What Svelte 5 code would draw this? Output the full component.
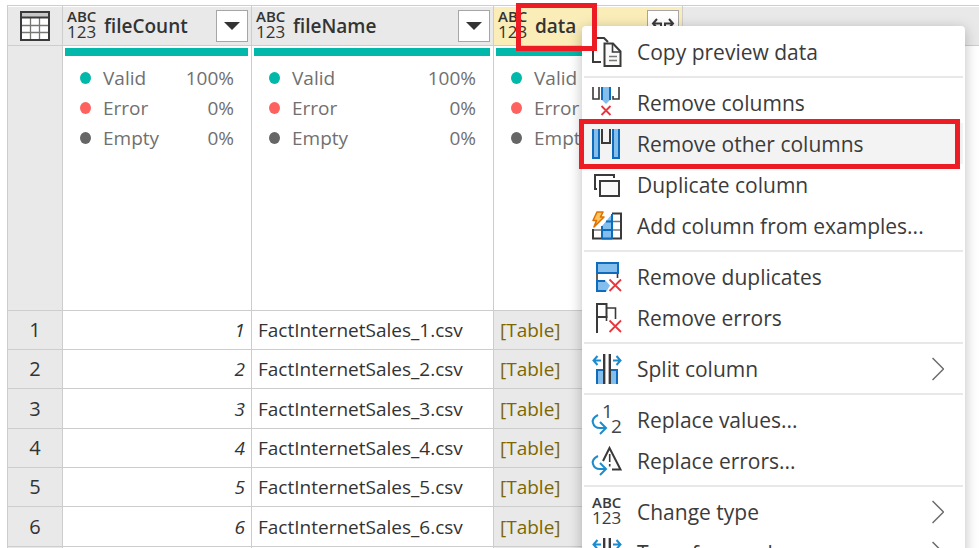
<script>
  const columns = [
    { name: 'fileCount', kind: 'filter' },
    { name: 'fileName', kind: 'filter' },
    { name: 'data', kind: 'expand', selected: true }
  ];
  const quality = [
    { label: 'Valid', value: '100%', tone: 'valid' },
    { label: 'Error', value: '0%', tone: 'error' },
    { label: 'Empty', value: '0%', tone: 'empty' }
  ];
  const rows = [1, 2, 3, 4, 5, 6];
  const groups = [
    [{ icon: 'copy', label: 'Copy preview data' }],
    [
      { icon: 'remove', label: 'Remove columns' },
      { icon: 'others', label: 'Remove other columns', active: true },
      { icon: 'duplicate', label: 'Duplicate column' },
      { icon: 'examples', label: 'Add column from examples...' }
    ],
    [
      { icon: 'dedupe', label: 'Remove duplicates' },
      { icon: 'errors', label: 'Remove errors' }
    ],
    [{ icon: 'split', label: 'Split column', sub: true }],
    [
      { icon: 'values', label: 'Replace values...' },
      { icon: 'replaceErrors', label: 'Replace errors...' }
    ],
    [
      { icon: 'type', label: 'Change type', sub: true },
      { icon: 'split', label: 'Transform column', sub: true }
    ]
  ];
</script>

{#snippet anyType()}
  <span class="any-type"><b>ABC</b><span>123</span></span>
{/snippet}

{#snippet icon(name)}
  {#if name === 'type'}
    {@render anyType()}
  {:else}
    <svg class="icon" viewBox="0 0 30 30" aria-hidden="true">
      {#if name === 'copy'}
        <path class="ink" d="M9 25H1V1h11l4 4" />
        <path class="ink paper" d="M12.500 6.500h8.500l7.500 8v14.500h-16z" />
        <path class="ink thin" d="M20.500 6.500v8.500h8" />
        <path class="grey" d="M17 19.500h8M17 23.500h8" />
      {:else if name === 'remove'}
        <path class="ink thin" d="M1 -1v12h6V-1M27 -1v12h-6V8" />
        <path fill="#83beec" d="M9 -1h10v12l-5 5-5-5z" />
        <path class="blue" d="M10 -1v13M18 -1v13" />
        <path class="red" d="M9.500 18l9 9M18.500 18l-9 9" />
      {:else if name === 'others'}
        <path fill="#83beec" d="M0 0h8v30H0zM20 0h8v30h-8z" />
        <path class="blue" d="M1 0v29h6V0M21 0v29h6V0" />
        <path class="ink" d="M10 0v14h8V0" />
      {:else if name === 'duplicate'}
        <path class="ink" d="M5 19H3V5h19v3" />
        <path class="ink paper" d="M8 11h19v15H8z" />
      {:else if name === 'examples'}
        <path class="grey" d="M1 19h28M20 10.500h9M10 19v8" />
        <path class="ink" d="M1 18v9.500h28V2.500h-9M20 18.500v9" />
        <path fill="#83beec" d="M10 15l10-12v25H10z" />
        <path class="blue" d="M10 27.500V15M20 27.500V3M10 19h10M14 10.500h6M10 27.500h10" />
        <path fill="#fbc35b" stroke="#e07000" stroke-width="1.600" stroke-linejoin="round" d="M5 1h6L8.500 6H12L2 16l2.500-6.500H1z" />
      {:else if name === 'dedupe'}
        <path class="ink thin" d="M5 11v8M25.500 11v5" />
        <path class="sky" d="M5 1h21v10H5z" />
        <path fill="#83beec" d="M4 18h9l5 5.500-4 6.500H4z" />
        <path class="blue" d="M13 19H5v10h9" />
        <path class="red" d="M17.500 17.500l11.500 11.500M29 17.500l-11.500 11.500" />
      {:else if name === 'errors'}
        <path class="ink" d="M5 30V1h9.500v13H5" />
        <path class="ink thin" d="M14.500 5h9v11M14.500 13v5" />
        <path class="red" d="M17.500 17.500l11.500 11.500M29 17.500l-11.500 11.500" />
      {:else if name === 'split'}
        <path fill="#83beec" d="M4 15h7v15H4zM19 15h7v15h-7z" />
        <path class="blue" d="M5 30V16h6M25 30V16h-6" />
        <path class="ink" d="M12 0v30M18 0v30" />
        <path stroke="#b5b5b5" stroke-width="1" d="M13.500 0v30M16.500 0v30" />
        <path class="azure" d="M9 6.500H1.500M5.500 2L1.500 6.500l4 4.500M21 6.500h7.500M24.500 2l4 4.500-4 4.500" />
      {:else if name === 'values'}
        <path class="azure" d="M6 10C2 12 0 15 1 18c1 4 4 5 7 5h6M8 17l6 6-6 6" />
        <text x="10" y="13">1</text>
        <text x="19" y="28">2</text>
      {:else if name === 'replaceErrors'}
        <path class="azure" d="M6 10C2 12 0 15 1 18c1 4 4 5 7 5h6M8 17l6 6-6 6" />
        <path class="ink" d="M11 15l6.500-13 11 21.500H20" />
        <path class="ink thin" d="M17.700 8v8M17.700 18v2.500" />
      {/if}
    </svg>
  {/if}
{/snippet}

<main>
  <table>
    <colgroup>
      <col class="index" /><col class="narrow" /><col class="wide" /><col class="narrow" /><col />
    </colgroup>
    <thead>
      <tr class="head">
        <th>
          <svg class="table-icon" viewBox="0 0 30 30" role="img" aria-label="Table">
            <path fill="#fff" d="M1 1h28v28H1z" />
            <path fill="#c8c8c8" d="M1 1h28v5H1z" />
            <path class="grey" d="M10.500 7v22M19.500 7v22M1 14.500h28M1 21.500h28" />
            <path class="ink" d="M1 1h28v28H1zM1 6.500h28" />
          </svg>
        </th>
        {#each columns as column}
          <th class:selected={column.selected}>
            <div class="title">
              {@render anyType()}
              <span class="name">{column.name}</span>
              <button aria-label="{column.kind} {column.name}">
                {#if column.kind === 'filter'}
                  <svg viewBox="0 0 30 30"><path fill="#333" d="M7 11h16l-8 8z" /></svg>
                {:else}
                  <svg viewBox="0 0 30 30"><path class="ink" d="M13 18V12.500H5M9 8l-4 4.500 4 4.500M17 18v-5.500h8M21 8l4 4.500-4 4.500" /></svg>
                {/if}
              </button>
            </div>
          </th>
        {/each}
        <th class="rest"></th>
      </tr>
    </thead>
    <tbody>
      <tr class="profile">
        <th></th>
        {#each columns as column}
          <td>
            <div class="bar"></div>
            <ul>
              {#each quality as item}
                <li><i class={item.tone}></i><span>{item.label}</span><span class="share">{item.value}</span></li>
              {/each}
            </ul>
          </td>
        {/each}
        <td class="rest"></td>
      </tr>
      {#each rows as row}
        <tr class="record">
          <th scope="row">{row}</th>
          <td class="number">{row}</td>
          <td>FactInternetSales_{row}.csv</td>
          <td class="link">[Table]</td>
          <td class="rest"></td>
        </tr>
      {/each}
      <tr class="record"><th></th><td></td><td></td><td class="link"></td><td class="rest"></td></tr>
    </tbody>
  </table>

  <div class="menu" role="menu">
    {#each groups as group, g}
      {#if g > 0}<hr />{/if}
      {#each group as item}
        <button role="menuitem" class:active={item.active}>
          {@render icon(item.icon)}
          <span class="label">{item.label}</span>
          {#if item.sub}
            <svg class="chevron" viewBox="0 0 12 24" aria-hidden="true"><path d="M0.500 1l11 11-11 11" /></svg>
          {/if}
        </button>
      {/each}
    {/each}
  </div>

  <div class="callout on-header"></div>
  <div class="callout on-item"></div>
</main>

<style>
  main {
    position: relative;
    height: 100vh;
    overflow: hidden;
    padding: 5px 0 0 7px;
    box-sizing: border-box;
    background: #fff;
    color: #333;
    font-family: "Open Sans", "Noto Sans", sans-serif;
    font-size: 19px;
    line-height: 30px;
  }
  table {
    width: 100%;
    table-layout: fixed;
    border-collapse: separate;
    border-spacing: 0;
    border: 1px solid #cdcdcd;
    border-width: 1px 0 0 1px;
  }
  .index { width: 55px; }
  .narrow { width: 189px; }
  .wide { width: 242px; }
  th, td {
    box-sizing: border-box;
    padding: 0;
    border: 1px solid #cdcdcd;
    border-width: 0 1px 1px 0;
    text-align: left;
    font-weight: 400;
  }
  th { background: #e9e9e9; text-align: center; }
  th.selected { background: #faedb8; }
  .rest { border-right: 0; }
  td.rest { border-bottom: 0; }
  .head th { height: 40px; box-shadow: inset 0 1px #fff; }
  .table-icon { display: block; width: 30px; height: 30px; margin: 0 auto; }
  .title { display: flex; align-items: center; padding: 0 3px 0 4px; }
  .name { flex: 1; margin-left: 7px; text-align: left; font-weight: 600; }
  .title button {
    width: 32px;
    height: 32px;
    padding: 0;
    border: 1px solid #a6a6a6;
    background: #fff;
  }
  .title button svg { display: block; width: 30px; height: 30px; }
  .any-type {
    display: flex;
    flex: none;
    flex-direction: column;
    width: 30px;
    height: 32px;
    text-align: left;
    font-size: 17px;
    line-height: 20px;
  }
  .any-type b { font-size: 15px; font-weight: 600; line-height: 12px; }

  .profile { height: 265px; vertical-align: top; }
  .profile td:not(.rest) { padding: 2px 3px 0 2px; }
  .bar { height: 8px; background: #01b8aa; }
  ul { margin: 7px 0 0; padding: 0 14px 0 15px; list-style: none; }
  li { display: flex; align-items: center; color: #707070; }
  li i { width: 11px; height: 12px; margin-right: 12px; border-radius: 50%; }
  .valid { background: #01b8aa; }
  .error { background: #fd625e; }
  .empty { background: #666; }
  .share { margin-left: auto; }

  .record { height: 39px; }
  .record:nth-child(3n + 1) { height: 40px; }
  .record th { font-size: 20px; }
  .record td { padding: 0 6px; }
  .record .number { text-align: right; font-style: italic; }
  .record .link { background: #e9e9e9; color: #7d6600; }

  .menu {
    position: absolute;
    top: 26px;
    left: 582px;
    width: 383px;
    box-sizing: border-box;
    padding: 5px 2px;
    border-radius: 4px;
    background: #fff;
    box-shadow: 0 3px 14px rgba(0, 0, 0, 0.26);
  }
  .menu button {
    display: flex;
    align-items: center;
    width: 100%;
    height: 41px;
    padding: 1px 19px 0 8px;
    border: 0;
    background: none;
    color: #3b3b3b;
    font: inherit;
    font-size: 21px;
    text-align: left;
  }
  .menu button.active { background: #f3f3f3; }
  .label { flex: 1; margin-left: 15px; white-space: nowrap; }
  hr { height: 2px; margin: 4px 0; border: 0; background: #e8e8e8; }

  .icon { flex: none; width: 30px; height: 30px; overflow: visible; }
  .icon text { fill: #444; font-size: 19px; }
  .chevron { width: 12px; height: 24px; }
  path { fill: none; }
  path[fill] { fill: revert-layer; }
  .chevron path { stroke: #6b6b6b; stroke-width: 1.5; }
  .ink { stroke: #3a3a3a; stroke-width: 2; }
  .thin { stroke-width: 1.6; }
  .paper { fill: #fafafa; }
  .grey { stroke: #797774; stroke-width: 1.3; }
  .blue { stroke: #0f6cbd; stroke-width: 2; }
  .sky { fill: #83beec; stroke: #0f6cbd; stroke-width: 2; }
  .azure { stroke: #1e8bcd; stroke-width: 2; }
  .red { stroke: #e8363c; stroke-width: 1.8; }

  .callout { position: absolute; box-sizing: border-box; border: 5px solid #ed1c24; pointer-events: none; }
  .on-header { top: 3px; left: 516px; width: 81px; height: 48px; }
  .on-item { top: 119px; left: 579px; width: 381px; height: 50px; }
</style>
